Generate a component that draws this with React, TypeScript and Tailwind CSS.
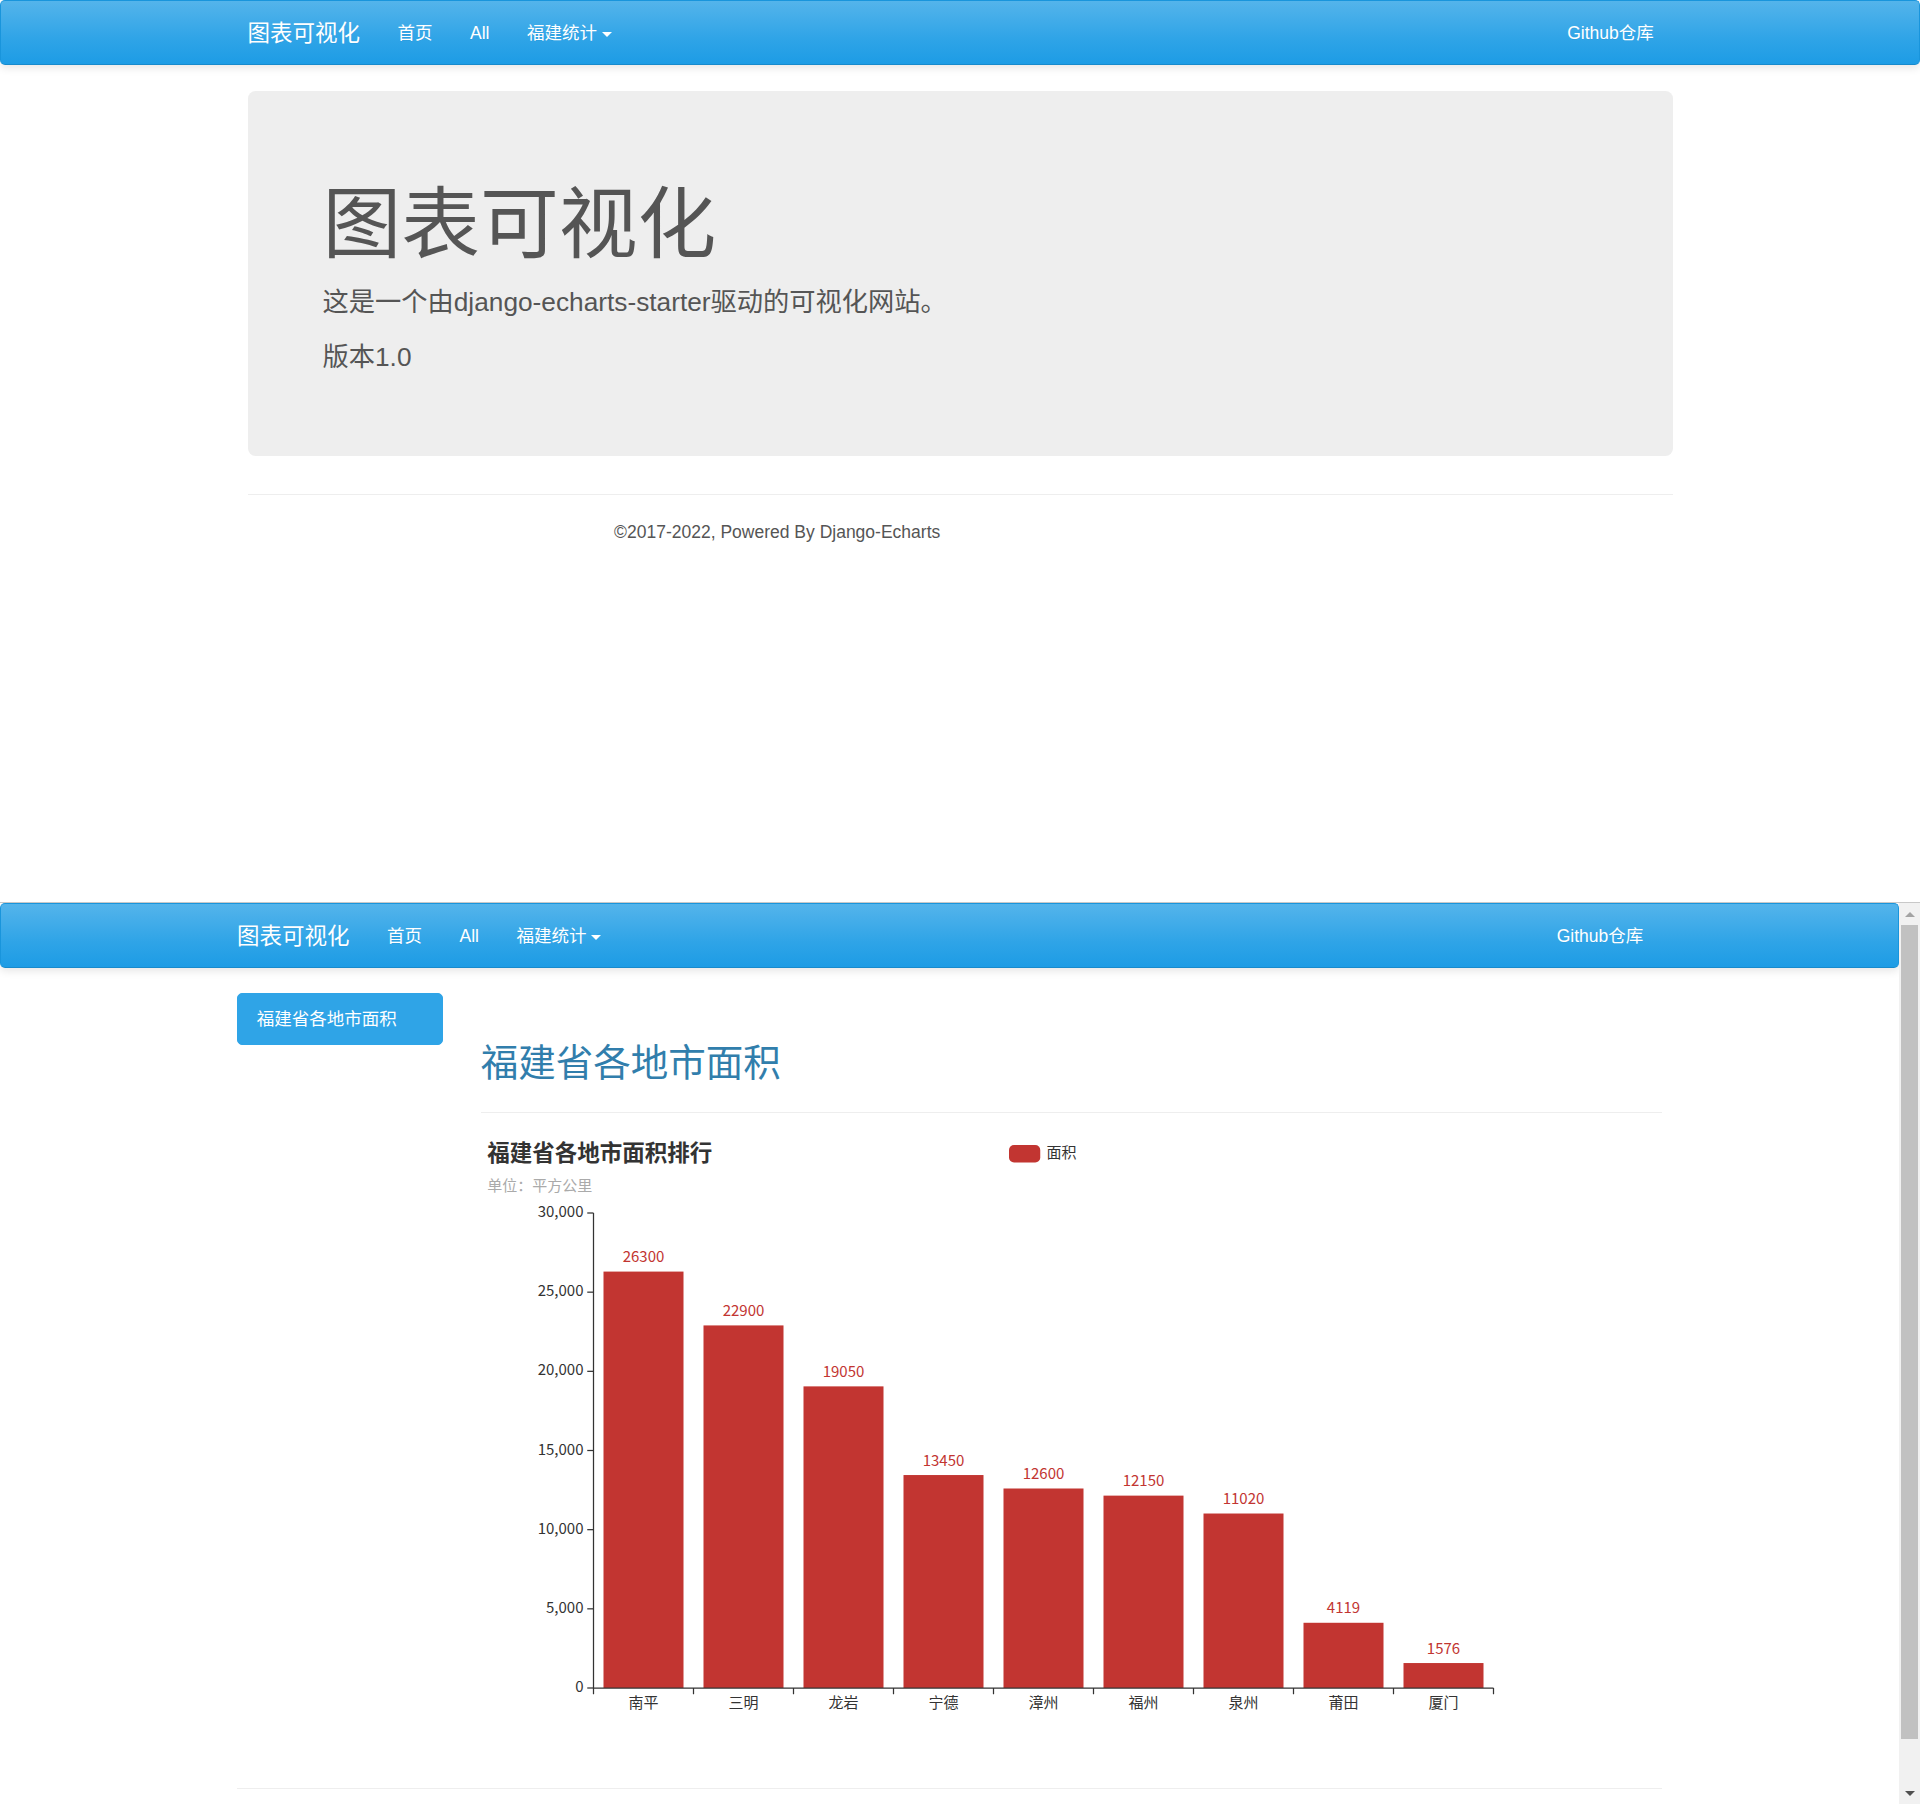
import * as React from "react";

interface NavbarProps {
  className?: string;
}

const navItems = ["首页", "All"];

const Navbar: React.FC<NavbarProps> = ({ className = "" }) => {
  return (
    <nav
      className={`h-[65px] rounded-[5px] border border-[#1995dc] border-b-[#178acc] bg-[linear-gradient(#54b4eb,#2fa4e7_60%,#1d9ce5)] shadow-[0_3px_8px_rgba(0,0,0,0.1)] ${className}`}
    >
      <div className="mx-auto flex h-full w-[1462.5px] items-center justify-between px-[18.75px] pt-[2px] text-white [text-shadow:0_1px_0_rgba(0,0,0,0.05)]">
        <div className="-ml-[18.75px] flex h-full items-center">
          <span className="px-[18.75px] text-[22.5px] leading-[25px]">图表可视化</span>
          {navItems.map((item) => (
            <span key={item} className="px-[18.75px] text-[17.5px] leading-[25px]">
              {item}
            </span>
          ))}
          <span className="flex items-center px-[18.75px] text-[17.5px] leading-[25px]">
            福建统计
            <span className="ml-[5px] mt-[2px] h-0 w-0 border-x-[5px] border-t-[5px] border-x-transparent border-t-white" />
          </span>
        </div>
        <span className="px-[18.75px] text-[17.5px] leading-[25px]">Github仓库</span>
      </div>
    </nav>
  );
};

const Jumbotron: React.FC = () => {
  return (
    <div className="mx-auto w-[1425px] rounded-[7.5px] bg-[#eee] px-[75px] py-[60px] text-[#555]">
      <h1 className="mb-[15px] mt-[31px] text-[78.75px] font-normal leading-[86px]">
        图表可视化
      </h1>
      <p className="mb-[17px] text-[26.25px] leading-[38px]">
        这是一个由django-echarts-starter驱动的可视化网站。
      </p>
      <p className="mb-[20px] text-[26.25px] leading-[38px]">版本1.0</p>
    </div>
  );
};

const Footer: React.FC = () => {
  return (
    <div className="mx-auto w-[1462.5px]">
      <hr className="mx-[18.75px] mb-[25px] mt-[37.5px] border-t border-[#eee]" />
      <div className="w-[1096.875px] px-[18.75px] text-center text-[17.5px] leading-[25px] text-[#555]">
        ©2017-2022, Powered By Django-Echarts
      </div>
    </div>
  );
};

// chart data, km²
const areas: [string, number][] = [
  ["南平", 26300],
  ["三明", 22900],
  ["龙岩", 19050],
  ["宁德", 13450],
  ["漳州", 12600],
  ["福州", 12150],
  ["泉州", 11020],
  ["莆田", 4119],
  ["厦门", 1576],
];

const BarChart: React.FC = () => {
  const left = 112.5;
  const right = 1012.5;
  const top = 75;
  const bottom = 550;
  const max = 30000;
  const step = (right - left) / areas.length;
  const y = (v: number) => bottom - (v / max) * (bottom - top);
  const ticks = [0, 5000, 10000, 15000, 20000, 25000, 30000];
  const font = "'Noto Sans CJK SC', 'Noto Sans', sans-serif";

  return (
    <svg width={1125} height={625} className="block overflow-visible" fontFamily={font}>
      <text x={6.25} y={17} fontSize={22.5} fontWeight="bold" fill="#333" dominantBaseline="middle">
        福建省各地市面积排行
      </text>
      <text x={6.25} y={48.5} fontSize={15} fill="#aaa" dominantBaseline="middle">
        单位：平方公里
      </text>
      <rect x={528} y={7} width={31.25} height={17.5} rx={5} fill="#c23531" />
      <text x={565.5} y={16} fontSize={15} fill="#333" dominantBaseline="middle">
        面积
      </text>

      {areas.map(([name, value], i) => {
        const x = left + step * i + step * 0.1;
        const h = bottom - y(value);
        return (
          <g key={name}>
            <rect x={x} y={y(value)} width={step * 0.8} height={h} fill="#c23531" />
            <text
              x={x + step * 0.4}
              y={y(value) - 13.5}
              fontSize={15}
              fill="#c23531"
              textAnchor="middle"
              dominantBaseline="middle"
            >
              {value}
            </text>
            <text
              x={left + step * i + step / 2}
              y={566}
              fontSize={15}
              fill="#333"
              textAnchor="middle"
              dominantBaseline="middle"
            >
              {name}
            </text>
          </g>
        );
      })}

      {ticks.map((t) => (
        <g key={t}>
          <line x1={left - 6.25} x2={left} y1={y(t)} y2={y(t)} stroke="#333" strokeWidth={1.25} />
          <text
            x={left - 10}
            y={y(t)}
            fontSize={15}
            fill="#333"
            textAnchor="end"
            dominantBaseline="middle"
          >
            {t.toLocaleString("en-US")}
          </text>
        </g>
      ))}

      {Array.from({ length: areas.length + 1 }).map((_, i) => (
        <line
          key={i}
          x1={left + step * i}
          x2={left + step * i}
          y1={bottom}
          y2={bottom + 6.25}
          stroke="#333"
          strokeWidth={1.25}
        />
      ))}
      <line x1={left} x2={left} y1={top} y2={bottom} stroke="#333" strokeWidth={1.25} />
      <line x1={left} x2={right} y1={bottom} y2={bottom} stroke="#333" strokeWidth={1.25} />
    </svg>
  );
};

const Scrollbar: React.FC = () => {
  return (
    <div className="flex w-[21px] shrink-0 flex-col bg-[#f1f1f1]">
      <div className="flex h-[22px] items-center justify-center">
        <span className="h-0 w-0 border-x-[5px] border-b-[5px] border-x-transparent border-b-[#a3a3a3]" />
      </div>
      <div className="mx-[2px] h-[814px] bg-[#c1c1c1]" />
      <div className="flex-1" />
      <div className="flex h-[22px] items-center justify-center">
        <span className="h-0 w-0 border-x-[5px] border-t-[5px] border-x-transparent border-t-[#505050]" />
      </div>
    </div>
  );
};

const ChartPage: React.FC = () => {
  return (
    <div className="flex h-[902px] border-t border-[#c8c8c8]">
      <div className="min-w-0 flex-1 overflow-hidden bg-white">
        <Navbar className="mb-[25px]" />
        <div className="mx-auto w-[1462.5px] px-[18.75px]">
          <div className="flex gap-[37.5px]">
            <aside className="w-[206.25px] shrink-0">
              <div className="rounded-[5px] border border-[#2fa4e7] bg-[#2fa4e7] px-[18.75px] py-[12.5px] text-[17.5px] leading-[25px] text-white">
                福建省各地市面积
              </div>
            </aside>
            <main className="min-w-0 flex-1">
              <div className="mb-[25px] mt-[50px] border-b border-[#eee] pb-[16px]">
                <h2 className="mb-[12px] text-[37.5px] font-normal leading-[41px] text-[#317eac]">
                  福建省各地市面积
                </h2>
              </div>
              <BarChart />
            </main>
          </div>
          <hr className="mt-[25px] border-t border-[#eee]" />
        </div>
      </div>
      <Scrollbar />
    </div>
  );
};

export default function App() {
  return (
    <div className="h-[1804px] overflow-hidden bg-white font-['Liberation_Sans','Noto_Sans_CJK_SC',sans-serif]">
      <div className="h-[902px]">
        <Navbar className="mb-[26px]" />
        <Jumbotron />
        <Footer />
      </div>
      <ChartPage />
    </div>
  );
}
